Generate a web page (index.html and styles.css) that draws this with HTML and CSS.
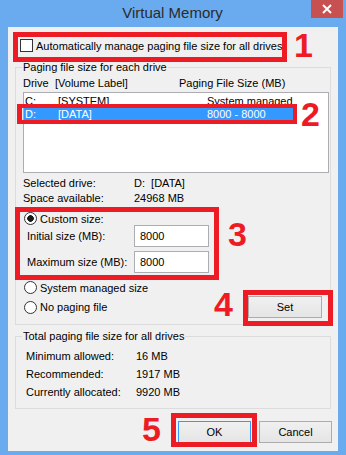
FILE: index.html
```html
<!DOCTYPE html>
<html lang="en">
<head>
    <meta charset="UTF-8">
    <meta name="viewport" content="width=device-width, initial-scale=1.0">
    <title>Virtual Memory</title>
    <link rel="stylesheet" href="styles.css">
</head>
<body>
    <div class="window">
        <div class="titlebar">
            <span class="title">Virtual Memory</span>
            <span class="close">
                <svg width="10" height="10" viewBox="0 0 10 10"><path d="M1 1L9 9M9 1L1 9" stroke="#fff" stroke-width="2"/></svg>
            </span>
        </div>
        <div class="client">
            <div class="auto-row"><span class="check"></span>Automatically manage paging file size for all drives</div>

            <fieldset class="group drives">
                <legend>Paging file size for each drive</legend>
                <div class="head">
                    <span>Drive</span><span>[Volume Label]</span><span>Paging File Size (MB)</span>
                </div>
                <div class="listbox">
                    <div class="row"><span>C:</span><span>[SYSTEM]</span><span>System managed</span></div>
                    <div class="row sel"><span>D:</span><span>[DATA]</span><span>8000 - 8000</span></div>
                </div>
                <div class="info">
                    <span>Selected drive:</span><span>D:&nbsp; [DATA]</span>
                    <span>Space available:</span><span>24968 MB</span>
                </div>
                <div class="custom">
                    <div class="radio-row first"><span class="radio on"></span>Custom size:</div>
                    <div class="sizes">
                        <span>Initial size (MB):</span><input class="field" type="text" value="8000">
                        <span>Maximum size (MB):</span><input class="field" type="text" value="8000">
                    </div>
                </div>
                <div class="radio-row"><span class="radio"></span>System managed size</div>
                <div class="set-row">
                    <div class="radio-row"><span class="radio"></span>No paging file</div>
                    <button class="btn set">Set</button>
                </div>
            </fieldset>

            <fieldset class="group total">
                <legend>Total paging file size for all drives</legend>
                <div class="totals">
                    <span>Minimum allowed:</span><span>16 MB</span>
                    <span>Recommended:</span><span>1917 MB</span>
                    <span>Currently allocated:</span><span>9920 MB</span>
                </div>
            </fieldset>

            <div class="actions">
                <button class="btn ok">OK</button>
                <button class="btn">Cancel</button>
            </div>
        </div>

        <!-- annotations drawn over the screenshot -->
        <div class="mark mark-1"></div>
        <div class="mark mark-2"></div>
        <div class="mark mark-3"></div>
        <div class="mark mark-4"></div>
        <div class="mark mark-5"></div>
        <span class="num num-1">1</span>
        <span class="num num-2">2</span>
        <span class="num num-3">3</span>
        <span class="num num-4">4</span>
        <span class="num num-5">5</span>
    </div>
</body>
</html>
```

FILE: styles.css
```css
body {
    margin: 0;
    font-family: "Liberation Sans", Arial, sans-serif;
    font-size: 11px;
    color: #000;
}
.window {
    position: relative;
    width: 346px;
    height: 455px;
    box-sizing: border-box;
    padding: 0 8px 4px 8px;
    background-color: #6aaaee;
    display: flex;
    flex-direction: column;
    overflow: hidden;
}
.titlebar {
    position: relative;
    height: 27px;
    margin: 0 -8px;
    text-align: center;
}
.titlebar .title {
    display: inline-block;
    margin: 4px 0 0 -1px;
    font-size: 15px;
    line-height: 18px;
    color: #2b2b2b;
}
.titlebar .close {
    position: absolute;
    top: 0;
    right: 3px;
    width: 32px;
    height: 18px;
    background-color: #c75050;
    display: flex;
    justify-content: center;
    align-items: center;
}
.client {
    flex: 1;
    background-color: #f0f0f0;
    padding: 0 7px;
    display: flex;
    flex-direction: column;
}
.auto-row {
    display: flex;
    align-items: center;
    gap: 3px;
    height: 15px;
    margin-top: 11px;
    padding-left: 5px;
    white-space: nowrap;
}
.check {
    width: 13px;
    height: 13px;
    box-sizing: border-box;
    border: 1px solid #333;
    background-color: #fff;
    flex: none;
}
.group {
    margin: 0;
    padding: 0;
    border: 1px solid #dcdcdc;
    min-width: 0;
}
.group legend {
    margin-left: 6px;
    padding: 0 1px;
    line-height: 14px;
}
.drives {
    margin-top: 7px;
    padding-bottom: 6px;
}
.head {
    display: grid;
    grid-template-columns: 32px 124px auto;
    padding: 2px 0 0 7px;
    line-height: 14px;
}
.listbox {
    height: 81px;
    box-sizing: border-box;
    margin: 2px 1px 0 7px;
    padding: 2px 0 0 0;
    border: 1px solid #abadb3;
    background-color: #fff;
}
.row {
    display: grid;
    grid-template-columns: 33px 149px auto;
    height: 13px;
    line-height: 13px;
    padding-left: 1px;
}
.row.sel {
    background-color: #3399ff;
    color: #fff;
    margin-right: 35px;
}
.info {
    display: grid;
    grid-template-columns: 111px auto;
    margin-top: 3px;
    padding-left: 7px;
    line-height: 15px;
}
.custom {
    margin-top: 1px;
    padding: 5px 0 6px 0;
}
.radio-row {
    display: flex;
    align-items: center;
    gap: 3px;
    height: 15px;
    padding-left: 8px;
    margin-top: 1px;
}
.radio-row.first {
    height: 13px;
    margin-top: 0;
}
.radio {
    width: 13px;
    height: 13px;
    box-sizing: border-box;
    border: 1px solid #333;
    border-radius: 50%;
    background-color: #fff;
    flex: none;
}
.radio.on {
    background: radial-gradient(circle, #1a1a1a 3px, #fff 3.6px);
}
.sizes {
    display: grid;
    grid-template-columns: 107px 75px;
    row-gap: 4px;
    align-items: center;
    padding-left: 11px;
}
.field {
    width: 75px;
    height: 22px;
    box-sizing: border-box;
    margin: 0;
    padding: 0 0 0 5px;
    border: 1px solid #abadb3;
    background-color: #fff;
    font-family: inherit;
    font-size: 11px;
    color: #000;
}
.set-row {
    display: flex;
    justify-content: space-between;
    align-items: center;
    margin-top: 1px;
    padding-right: 8px;
}
.set-row .radio-row {
    margin-top: 0;
}
.btn {
    width: 74px;
    height: 22px;
    margin: 0;
    padding: 0;
    border: 1px solid #acacac;
    background: linear-gradient(#f0f0f0, #e5e5e5);
    font-family: inherit;
    font-size: 11px;
    color: #000;
}
.btn.ok {
    border-color: #3399ff;
}
.total {
    margin-top: 4px;
    padding-bottom: 7px;
}
.totals {
    display: grid;
    grid-template-columns: 110px auto;
    padding: 4px 0 0 10px;
    line-height: 18px;
}
.actions {
    display: flex;
    justify-content: flex-end;
    gap: 8px;
    margin: 12px -1px 0 0;
}
.actions .btn {
    width: 73px;
}

/* red annotation boxes and numbers */
.mark {
    position: absolute;
    box-sizing: border-box;
    border: 5px solid #ed1c24;
}
.mark-1 { left: 13px; top: 32px; width: 274px; height: 30px; }
.mark-2 { left: 17px; top: 104px; width: 280px; height: 20px; border-width: 4px 4px 4px 5px; }
.mark-3 { left: 15px; top: 207px; width: 204px; height: 73px; }
.mark-4 { left: 243px; top: 290px; width: 90px; height: 36px; }
.mark-5 { left: 171px; top: 413px; width: 86px; height: 34px; }
.num {
    position: absolute;
    font-family: "Liberation Sans", Arial, sans-serif;
    font-weight: bold;
    font-size: 34px;
    line-height: 34px;
    color: #ed1c24;
}
.num-1 { left: 294px; top: 28px; }
.num-2 { left: 301px; top: 97px; }
.num-3 { left: 228px; top: 217px; }
.num-4 { left: 214px; top: 287px; }
.num-5 { left: 142px; top: 412px; }
```
